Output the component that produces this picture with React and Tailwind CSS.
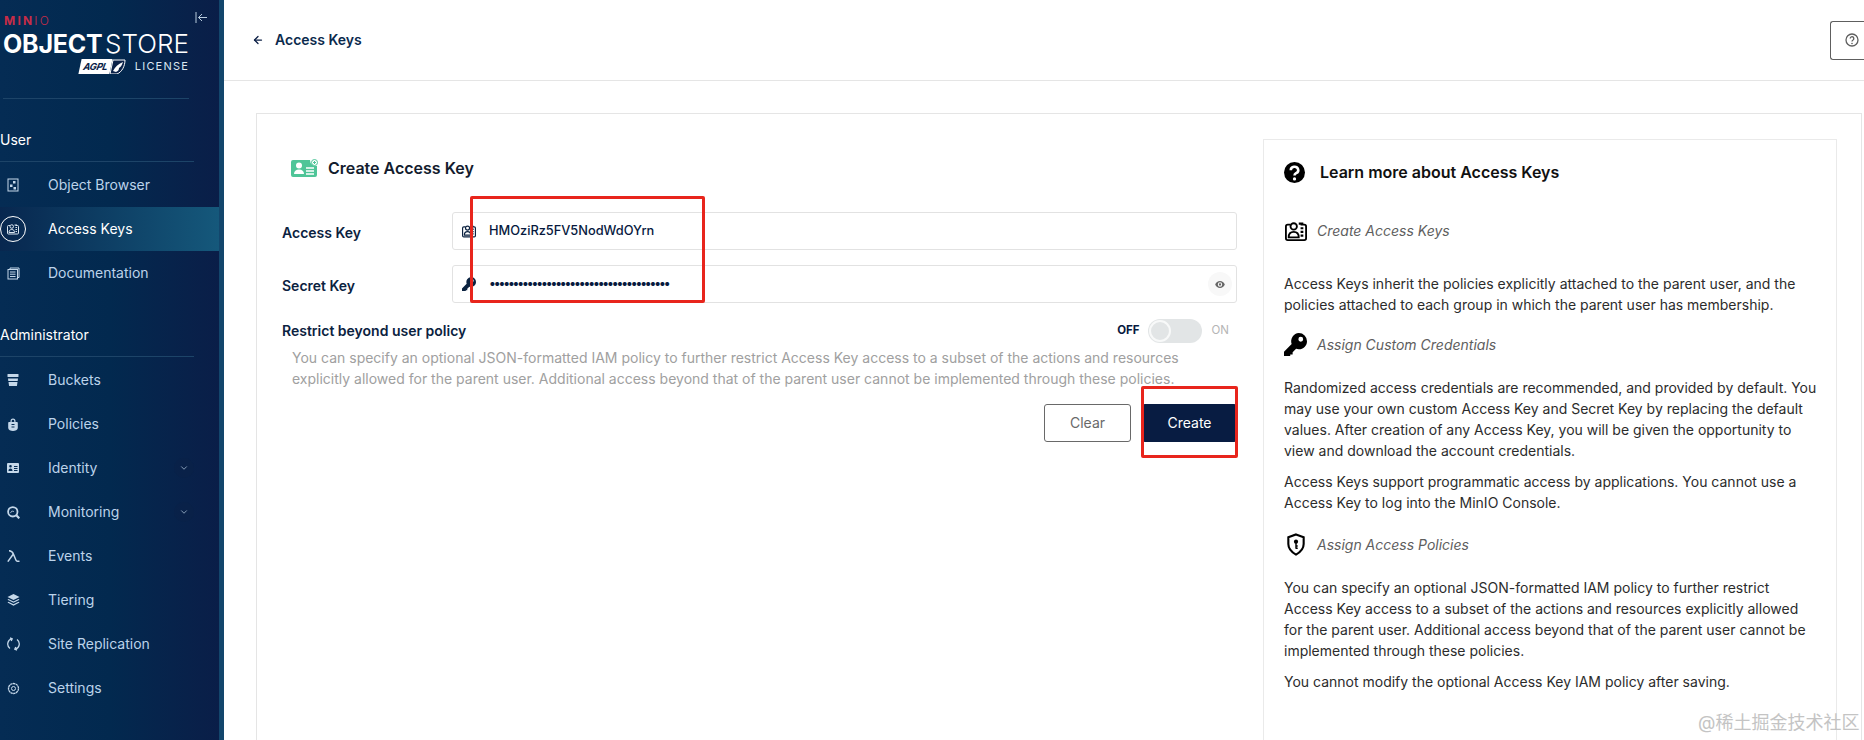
import { ArrowLeft, ChevronDown } from "lucide-react";

function IdCardIcon({ size = 14 }) {
  return (
    <svg width={size} height={size} viewBox="0 0 24 22" fill="none" stroke="currentColor" strokeWidth="2">
      <path d="M6 4H3a2 2 0 0 0-2 2v13a2 2 0 0 0 2 2h18a2 2 0 0 0 2-2V6a2 2 0 0 0-2-2h-4" />
      <circle cx="9.500" cy="6" r="3.500" />
      <path d="M4 18c0-4 2-6 5.500-6s5.500 2 5.500 6z" />
      <path d="M15 3h5M17 8h3M17 12h3M17 16h3" strokeWidth="2.400" />
    </svg>
  );
}

function KeyIcon({ size = 14 }) {
  return (
    <svg width={size} height={size} viewBox="0 0 24 24" fill="currentColor">
      <path d="M15.500 0a8.500 8.500 0 0 1 8.500 8.500c0 4.700-3.800 8.500-8.500 8.500-1 0-2-.2-2.900-.5L9 20v2.500H6.500V25H0v-5.500L8 11.400a8.500 8.500 0 0 1 7.500-11.400zm2 4a2.500 2.500 0 1 0 0 5 2.500 2.500 0 0 0 0-5z" />
    </svg>
  );
}

function ShieldIcon({ size = 20 }) {
  return (
    <svg width={size} height={size + 3} viewBox="0 0 20 24" fill="none" stroke="currentColor" strokeWidth="2.200">
      <path d="M10 1.500l8 3v7c0 5-3.500 8.500-8 11-4.500-2.500-8-6-8-11v-7z" />
      <circle cx="10" cy="9" r="2.200" fill="currentColor" stroke="none" />
      <path d="M10 10v6.500M10 13.500h1.800M10 16h1.800" strokeWidth="1.500" />
    </svg>
  );
}

function SideIcon({ name }) {
  if (name === "browser")
    return (
      <svg width="12" height="14" viewBox="0 0 12 14" fill="none" stroke="currentColor">
        <rect x="1" y="1" width="10" height="12" />
        <rect x="6" y="3" width="2.500" height="2.500" fill="currentColor" stroke="none" />
        <rect x="3" y="6.500" width="2.500" height="2.500" fill="currentColor" stroke="none" />
        <rect x="6.500" y="9" width="2.500" height="2.500" fill="currentColor" stroke="none" />
      </svg>
    );
  if (name === "keys")
    return (
      <span className="flex h-[26px] w-[26px] items-center justify-center rounded-full border border-white text-[#dbe7f2]">
        <IdCardIcon size={12} />
      </span>
    );
  if (name === "docs")
    return (
      <svg width="13" height="13" viewBox="0 0 13 13" fill="none" stroke="currentColor">
        <path d="M3 2.500V1h9v9.500h-1.500" />
        <rect x="1" y="2.500" width="9.500" height="9.500" />
        <path d="M3 5h5.500M3 7.200h5.500M3 9.500h5.500" />
      </svg>
    );
  if (name === "buckets")
    return (
      <svg width="12" height="12" viewBox="0 0 12 12" fill="currentColor">
        <rect x="0.500" y="0" width="11" height="3" rx="0.500" />
        <path d="M1 4.500h10l-.3 2.500H1.300zM1.500 8h9l-.5 3.500a.5.5 0 0 1-.5.5h-7a.5.5 0 0 1-.5-.5z" />
      </svg>
    );
  if (name === "policies")
    return (
      <svg width="10" height="13" viewBox="0 0 10 13" fill="currentColor">
        <path d="M2.500 4V3a2.500 2.500 0 0 1 5 0v1H9a1 1 0 0 1 .8 1v5c0 2-2.500 3-4.800 3S.2 12 .2 10V5A1 1 0 0 1 1 4zM3.700 4h2.600V3a1.300 1.300 0 0 0-2.600 0zM3.500 6v1h3V6zm0 2.500v1h3v-1z" fillRule="evenodd" />
      </svg>
    );
  if (name === "identity")
    return (
      <svg width="12" height="10" viewBox="0 0 12 10" fill="currentColor">
        <path d="M1 0h10a1 1 0 0 1 1 1v8a1 1 0 0 1-1 1H1a1 1 0 0 1-1-1V1a1 1 0 0 1 1-1zm2.500 2a1.300 1.300 0 1 0 0 2.600 1.300 1.300 0 0 0 0-2.600zM1.500 8h4c0-1.500-.7-2.500-2-2.500s-2 1-2 2.500zM7 3v1h3.500V3zm0 2v1h3.500V5zm0 2v1h3.500V7z" fillRule="evenodd" />
      </svg>
    );
  if (name === "monitoring")
    return (
      <svg width="13" height="13" viewBox="0 0 13 13" fill="none" stroke="currentColor" strokeWidth="1.800">
        <circle cx="5.800" cy="5.800" r="4.700" />
        <path d="M9.300 9.300l3 3" strokeWidth="2.200" />
        <path d="M3.500 6.800l2-2 1.200 1.200" strokeWidth="1" />
      </svg>
    );
  if (name === "events")
    return (
      <svg width="13" height="12" viewBox="0 0 13 12" fill="none" stroke="currentColor" strokeWidth="1.500">
        <path d="M.8 11.600L6 4.500M2 .7c2.500 0 3.500 1 4.500 3.500l2.500 6c.4 1 1.500 1.300 3.500 1" />
      </svg>
    );
  if (name === "tiering")
    return (
      <svg width="13" height="12" viewBox="0 0 13 12" fill="currentColor">
        <path d="M6.500 0l6 3-6 3-6-3z" />
        <path d="M1.500 5l5 2.500 5-2.500 1 .8-6 3-6-3zM1.500 7.700l5 2.500 5-2.500 1 .8-6 3.300-6-3.300z" />
      </svg>
    );
  if (name === "replication")
    return (
      <svg width="13" height="14" viewBox="0 0 13 14" fill="none" stroke="currentColor" strokeWidth="1.300">
        <path d="M3 11.500A5.500 5.500 0 0 1 5 1.700" />
        <path d="M3 .8l2.200 1-1 2.200" />
        <path d="M10 2.500A5.500 5.500 0 0 1 8 12.300" />
        <path d="M10 13.200l-2.200-1 1-2.200" />
      </svg>
    );
  return (
    <svg width="13" height="13" viewBox="0 0 13 13" fill="none" stroke="currentColor">
      <circle cx="6.500" cy="6.500" r="2" />
      <circle cx="6.500" cy="6.500" r="5" strokeDasharray="2.400 .4" strokeWidth="1.300" />
    </svg>
  );
}

const userItems = [
  { name: "browser", label: "Object Browser" },
  { name: "keys", label: "Access Keys", active: true },
  { name: "docs", label: "Documentation" },
];

const adminItems = [
  { name: "buckets", label: "Buckets" },
  { name: "policies", label: "Policies" },
  { name: "identity", label: "Identity", more: true },
  { name: "monitoring", label: "Monitoring", more: true },
  { name: "events", label: "Events" },
  { name: "tiering", label: "Tiering" },
  { name: "replication", label: "Site Replication" },
  { name: "settings", label: "Settings" },
];

function SideItem({ item }) {
  return (
    <div
      className={`flex h-[44px] items-center text-sm ${
        item.active ? "bg-gradient-to-r from-[#08274f] to-[#15587b] text-white" : "text-[#bcd3ea]"
      }`}
    >
      <span className="flex w-[48px] shrink-0 items-center justify-center pr-[22px] text-[#c5d8ea]">
        <SideIcon name={item.name} />
      </span>
      <span className="flex-1">{item.label}</span>
      {item.more && (
        <span className="mr-[25px] flex h-[20px] w-[20px] items-center justify-center rounded-full bg-[#0a2148]/60 text-[#9fb6cc]">
          <ChevronDown size={10} />
        </span>
      )}
    </div>
  );
}

function SectionLabel({ children, size }) {
  return (
    <div className={`mr-[25px] flex items-center border-b border-[#1d4468] text-sm text-white ${size}`}>
      {children}
    </div>
  );
}

function Sidebar() {
  return (
    <aside className="w-[224px] shrink-0 border-r-[5px] border-[#13466c] bg-gradient-to-r from-[#052c54] via-[#02294f] to-[#0a1e48]">
      <div className="relative mr-[30px] ml-[3px] h-[99px] border-b border-[#1d4468]">
        <div className="pt-[15px] pl-[1px] text-[12px] leading-[12px] font-bold tracking-[2.200px] text-[#c72c48]">
          MIN<span className="font-light">IO</span>
        </div>
        <div className="mt-[3px] flex items-baseline justify-between text-[25px] leading-[27px] whitespace-nowrap text-white">
          <span className="font-bold tracking-[-0.2px]">OBJECT</span>
          <span className="text-[26px] font-light">STORE</span>
        </div>
        <div className="mt-[1px] flex items-center justify-end gap-[9px]">
          <span className="flex h-[15px] items-center">
            <span className="flex h-[15px] w-[31px] -skew-x-12 items-center justify-center bg-white text-[9.500px] leading-none font-bold tracking-[-0.3px] text-[#0a2148] italic">
              AGPL
            </span>
            <svg width="16" height="15" viewBox="0 0 16 15" className="-ml-[1px]">
              <path d="M0 15L3 1h12c0 6-3 12-8 14z" fill="#0a2148" stroke="#fff" />
              <path d="M3 12c2-4 5-7 10-9-1 3-2 5-4 6 0 2-1 3-3 4z" fill="#fff" />
            </svg>
          </span>
          <span className="text-[11px] leading-[15px] tracking-[1.200px] text-[#dbe7f2]">LICENSE</span>
        </div>
        <svg
          width="13"
          height="13"
          viewBox="0 0 13 13"
          fill="none"
          stroke="currentColor"
          className="absolute top-[11px] -right-[19px] text-[#b7cbdd]"
        >
          <path d="M1 1v11M12 6.500H3.500M7 3L3.500 6.500 7 10" />
        </svg>
      </div>
      <SectionLabel size="h-[63px] pt-[20px]">User</SectionLabel>
      <div className="mt-[1px]">
        {userItems.map((item) => (
          <SideItem key={item.label} item={item} />
        ))}
      </div>
      <SectionLabel size="h-[62px] pt-[18px]">Administrator</SectionLabel>
      <div className="mt-[1px]">
        {adminItems.map((item) => (
          <SideItem key={item.label} item={item} />
        ))}
      </div>
    </aside>
  );
}

function Field({ label, icon, type, value, right }) {
  return (
    <div className="flex items-center">
      <label className="w-[170px] shrink-0 pt-[4px] text-sm font-semibold text-[#0b2240]">{label}</label>
      <div className="flex h-[38px] flex-1 items-center rounded-[3px] border border-[#e2e2e2] bg-white pr-[3px] pl-[9px]">
        <span className="flex w-[27px] shrink-0 items-center text-[#0b2240]">{icon}</span>
        <input
          readOnly
          type={type}
          value={value}
          className={`min-w-0 flex-1 text-[12.800px] font-medium text-[#07193e] outline-none ${
            type === "password" ? "tracking-[-2.100px]" : ""
          }`}
        />
        {right}
      </div>
    </div>
  );
}

function HelpTitle({ icon, children }) {
  return (
    <div className="flex items-center gap-[10px]">
      <span className="flex w-[23px] justify-center text-black">{icon}</span>
      <span className="text-sm text-[#5e5e5e] italic">{children}</span>
    </div>
  );
}

function HelpPanel() {
  return (
    <div className="ml-[26px] h-full border-x border-t border-[#eaeaea] pt-[20px] pr-[17px] pl-[20px] text-sm leading-[21px] text-[#2c2c2c]">
      <div className="flex items-center gap-[15px] text-base font-semibold text-[#111]">
        <svg width="21" height="21" viewBox="0 0 18 18">
          <circle cx="9" cy="9" r="9" fill="#000" />
          <path d="M5.800 7a3.200 2.900 0 1 1 4.600 2.600c-1 .6-1.400 1-1.400 2" fill="none" stroke="#fff" strokeWidth="2.200" />
          <circle cx="9" cy="14.500" r="1.400" fill="#fff" />
        </svg>
        Learn more about Access Keys
      </div>
      <div className="mt-[36px]">
        <HelpTitle icon={<IdCardIcon size={22} />}>Create Access Keys</HelpTitle>
      </div>
      <p className="mt-[31px]">
        Access Keys inherit the policies explicitly attached to the parent user, and the policies attached to each group in which the parent user has membership.
      </p>
      <div className="mt-[18px]">
        <HelpTitle icon={<KeyIcon size={23} />}>Assign Custom Credentials</HelpTitle>
      </div>
      <p className="mt-[21px]">
        Randomized access credentials are recommended, and provided by default. You may use your own custom Access Key and Secret Key by replacing the default values. After creation of any Access Key, you will be given the opportunity to view and download the account credentials.
      </p>
      <p className="mt-[10px]">
        Access Keys support programmatic access by applications. You cannot use a Access Key to log into the MinIO Console.
      </p>
      <div className="mt-[20px]">
        <HelpTitle icon={<ShieldIcon size={20} />}>Assign Access Policies</HelpTitle>
      </div>
      <p className="mt-[21px]">
        You can specify an optional JSON-formatted IAM policy to further restrict Access Key access to a subset of the actions and resources explicitly allowed for the parent user. Additional access beyond that of the parent user cannot be implemented through these policies.
      </p>
      <p className="mt-[10px]">You cannot modify the optional Access Key IAM policy after saving.</p>
    </div>
  );
}

function CreateForm() {
  return (
    <div className="w-[955px] shrink-0 pt-[42px]">
      <div className="flex items-center pl-[9px]">
        <svg width="27" height="18" viewBox="0 0 27 18" fill="#4fc598">
          <path d="M2 1h17a6 6 0 0 0 7 6v9a2 2 0 0 1-2 2H2a2 2 0 0 1-2-2V3a2 2 0 0 1 2-2z" />
          <circle cx="8" cy="6.500" r="3" fill="#fff" />
          <path d="M3 15c0-3 2-4.500 5-4.500s5 1.500 5 4.500z" fill="#fff" />
          <path d="M15 9h8M15 12h8M15 15h8" stroke="#fff" strokeWidth="1.500" />
          <circle cx="23.500" cy="3.500" r="3" fill="none" stroke="#4fc598" strokeWidth="1" />
          <path d="M23.500 2v3M22 3.500h3" stroke="#4fc598" />
        </svg>
        <h1 className="ml-[10px] text-base font-semibold text-[#131c2e]">Create Access Key</h1>
      </div>
      <div className="mt-[32px] flex flex-col gap-[15px]">
        <Field label="Access Key" type="text" value="HMOziRz5FV5NodWdOYrn" icon={<IdCardIcon size={14} />} />
        <Field
          label="Secret Key"
          type="password"
          value="abcdefghijklmnopqrstuvwxyz012345678901"
          icon={<KeyIcon size={14} />}
          right={
            <span className="mr-[1px] flex h-[24px] w-[24px] shrink-0 items-center justify-center rounded-full bg-[#f8f8f8]">
              <svg width="10" height="7" viewBox="0 0 11 8" fill="#666">
                <path d="M5.500 0C3 0 1 1.600 0 4c1 2.400 3 4 5.500 4S10 6.400 11 4C10 1.600 8 0 5.500 0zm0 1.500a2.500 2.500 0 1 1 0 5 2.500 2.500 0 0 1 0-5z" fillRule="evenodd" />
                <circle cx="5.500" cy="4" r="1.300" />
              </svg>
            </span>
          }
        />
      </div>
      <div className="mt-[16px] flex h-[24px] items-center">
        <span className="flex-1 text-sm font-semibold text-[#0b2240]">Restrict beyond user policy</span>
        <span className="text-[11.500px] font-bold text-[#07193e]">OFF</span>
        <span className="mr-[10px] ml-[8px] flex h-[24px] w-[54px] items-center rounded-full bg-[#e2e5e6] pl-[1px]">
          <span className="h-[22px] w-[22px] rounded-full border-2 border-[#f8f9f9] bg-[#e2e5e6]" />
        </span>
        <span className="mr-[8px] text-[11.500px] text-[#b5b5b5]">ON</span>
      </div>
      <p className="mt-[4px] pr-[40px] pl-[10px] text-sm leading-[21px] text-[#a0a0a0]">
        You can specify an optional JSON-formatted IAM policy to further restrict Access Key access to a subset of the actions and resources explicitly allowed for the parent user. Additional access beyond that of the parent user cannot be implemented through these policies.
      </p>
      <div className="mt-[15px] flex justify-end gap-[11px]">
        <button className="h-[38px] w-[87px] rounded-[3px] border border-[#696969] text-sm text-[#696969]">Clear</button>
        <button className="h-[38px] w-[95px] rounded-[3px] bg-[#081c42] text-sm text-white">Create</button>
      </div>
    </div>
  );
}

export default function App() {
  return (
    <div className="relative flex h-[740px] w-[1864px] overflow-hidden bg-white [font-family:Inter,'Noto_Sans_CJK_SC',sans-serif]">
      <Sidebar />
      <main className="min-w-0 flex-1">
        <header className="flex h-[81px] items-center border-b border-[#e5e5e5]">
          <ArrowLeft size={12} strokeWidth={2.500} className="ml-[28px] text-[#0b1f45]" />
          <span className="ml-[11px] text-sm font-semibold text-[#0b2a4d]">Access Keys</span>
          <span className="ml-auto flex h-[39px] w-[34px] items-center rounded-l-[3px] border border-r-0 border-[#5e5e5e] pl-[14px] text-[#5e5e5e]">
            <svg width="14" height="14" viewBox="0 0 14 14" fill="none" stroke="currentColor" strokeWidth="1.300">
              <circle cx="7" cy="7" r="6" />
              <path d="M5.200 5.500a1.800 1.800 0 1 1 2.800 1.500c-.7.400-1 .7-1 1.500" />
              <circle cx="7" cy="10.500" r=".8" fill="currentColor" stroke="none" />
            </svg>
          </span>
        </header>
        <section className="mt-[32px] ml-[32px] flex h-[640px] w-[1606px] border border-[#e5e5e5] pr-[24px] pl-[25px]">
          <CreateForm />
          <div className="flex-1 pt-[25px]">
            <HelpPanel />
          </div>
        </section>
      </main>
      {/* red boxes drawn over the shot */}
      <div className="pointer-events-none absolute top-[196px] left-[470px] h-[107px] w-[235px] rounded-[2px] border-[3px] border-[#e8251c]" />
      <div className="pointer-events-none absolute top-[386px] left-[1141px] h-[72px] w-[97px] rounded-[2px] border-[3px] border-[#e8251c]" />
      <span className="pointer-events-none absolute top-[712px] left-[1698px] text-[18px] leading-[22px] whitespace-nowrap text-[#c4c4c4]">@稀土掘金技术社区</span>
    </div>
  );
}
